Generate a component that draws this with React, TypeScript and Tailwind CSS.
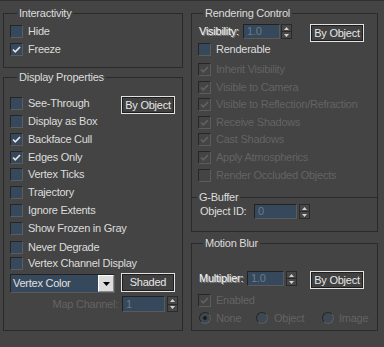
type BoxProps = { checked?: boolean; disabled?: boolean }

function CheckBox({ checked = false, disabled = false }: BoxProps) {
  return (
    <span
      className={`flex h-[13px] w-[13px] shrink-0 items-center justify-center border border-t-[#262626] border-l-[#262626] border-r-[#5c5c5c] border-b-[#5c5c5c] ${
        disabled ? 'bg-[#444444]' : 'bg-[#36495c]'
      }`}
    >
      {checked && (
        <svg width="11" height="11" viewBox="0 0 11 11">
          <path
            d="M2 5.5 L4.3 7.8 L9 3"
            fill="none"
            stroke={disabled ? '#626262' : '#e4e4e4'}
            strokeWidth="1.7"
          />
        </svg>
      )}
    </span>
  )
}

function CheckRow({
  label,
  checked,
  disabled,
  className = '',
}: BoxProps & { label: string; className?: string }) {
  return (
    <div className={`flex h-[13px] items-center ${className}`}>
      <CheckBox checked={checked} disabled={disabled} />
      <span className={`ml-[5px] whitespace-nowrap leading-[13px] ${disabled ? 'text-[#636363]' : ''}`}>
        {label}
      </span>
    </div>
  )
}

function Radio({ on = false }: { on?: boolean }) {
  return (
    <span className="flex h-[12px] w-[12px] shrink-0 items-center justify-center rounded-full border border-t-[#262626] border-l-[#262626] border-r-[#5c5c5c] border-b-[#5c5c5c] bg-[#3e4853]">
      {on && <span className="h-[4px] w-[4px] rounded-full bg-[#1c1c1c]" />}
    </span>
  )
}

function Field({ value, className }: { value: string; className: string }) {
  return (
    <div
      className={`flex items-center border border-t-[#222222] border-l-[#222222] border-r-[#5a5a5a] border-b-[#5a5a5a] bg-[#36495c] pl-[3px] leading-[13px] text-[#6b7988] ${className}`}
    >
      {value}
    </div>
  )
}

function Spin({ className }: { className: string }) {
  return (
    <div className={`flex w-[11px] flex-col border border-[#2a2a2a] bg-[#474747] ${className}`}>
      <div className="flex flex-1 items-center justify-center">
        <svg width="5" height="3" viewBox="0 0 5 3">
          <path d="M2.5 0 L5 3 L0 3 Z" fill="#d2d2d2" />
        </svg>
      </div>
      <div className="flex flex-1 items-center justify-center border-t border-[#2a2a2a]">
        <svg width="5" height="3" viewBox="0 0 5 3">
          <path d="M0 0 L5 0 L2.5 3 Z" fill="#d2d2d2" />
        </svg>
      </div>
    </div>
  )
}

function Btn({ label, className }: { label: string; className: string }) {
  return (
    <div
      className={`flex w-[54px] items-center justify-center border border-[#e2e2e2] bg-[#414141] leading-[13px] text-[#e6e6e6] shadow-[inset_0_0_0_1px_#1e1e1e] ${className}`}
    >
      {label}
    </div>
  )
}

export default function App() {
  return (
    <div className="flex h-[347px] w-[384px] gap-[8px] overflow-hidden bg-[#444444] pl-[3px] font-['Liberation_Sans',Arial,sans-serif] text-[11px] tracking-[-0.25px] text-[#dcdcdc] shadow-[inset_0_1px_0_#303030]">
      {/* left column */}
      <div className="mt-[7px] flex w-[180px] flex-col">
        <fieldset className="border border-[#2a2a2a] pb-[11px] pl-[6px]">
          <legend className="ml-[7px] px-[2px] leading-[13px]">Interactivity</legend>
          <CheckRow label="Hide" className="mt-[5px]" />
          <CheckRow label="Freeze" checked className="mt-[5px]" />
        </fieldset>

        <fieldset className="mt-[3px] border border-[#2a2a2a] pt-[12px] pb-[18px] pl-[6px]">
          <legend className="ml-[7px] px-[2px] leading-[13px]">Display Properties</legend>
          <div className="flex h-[18px] items-start">
            <div className="flex h-[15px] w-[111px] items-center">
              <CheckRow label="See-Through" />
            </div>
            <Btn label="By Object" className="h-[18px]" />
          </div>
          <CheckRow label="Display as Box" className="mt-[1px]" />
          <CheckRow label="Backface Cull" checked className="mt-[5px]" />
          <CheckRow label="Edges Only" checked className="mt-[5px]" />
          <CheckRow label="Vertex Ticks" className="mt-[4px]" />
          <CheckRow label="Trajectory" className="mt-[5px]" />
          <CheckRow label="Ignore Extents" className="mt-[5px]" />
          <CheckRow label="Show Frozen in Gray" className="mt-[5px]" />
          <CheckRow label="Never Degrade" className="mt-[6px]" />
          <CheckRow label="Vertex Channel Display" className="mt-[3px]" />

          <div className="mt-[3px] flex h-[20px] items-start">
            <div className="mt-[1px] flex h-[19px] w-[105px] items-center border border-t-[#222222] border-l-[#222222] border-r-[#5a5a5a] border-b-[#5a5a5a] bg-[#36495c]">
              <span className="flex-1 pl-[2px] leading-[13px] text-[#e0e0e0]">Vertex Color</span>
              <span className="flex h-full w-[16px] items-center justify-center border border-t-[#ffffff] border-l-[#ffffff] border-r-[#8a8a8a] border-b-[#8a8a8a] bg-[#dcdcdc]">
                <svg width="7" height="4" viewBox="0 0 7 4">
                  <path d="M0 0 L7 0 L3.5 4 Z" fill="#000000" />
                </svg>
              </span>
            </div>
            <Btn label="Shaded" className="ml-[6px] h-[19px]" />
          </div>

          <div className="mt-[3px] flex h-[16px] items-center">
            <span className="w-[108px] whitespace-nowrap text-right leading-[13px] text-[#636363]">Map Channel:</span>
            <Field value="1" className="ml-[4px] h-[16px] w-[43px]" />
            <Spin className="ml-[2px] h-[16px]" />
          </div>
        </fieldset>
      </div>

      {/* right column */}
      <div className="mt-[7px] flex w-[187px] flex-col">
        <fieldset className="border border-[#2a2a2a] pt-[4px] pb-[12px] pl-[6px]">
          <legend className="ml-[5px] px-[2px] leading-[13px]">Rendering Control</legend>
          <div className="flex h-[18px] items-start">
            <span className="ml-[1px] flex h-[15px] w-[44px] items-center leading-[13px] text-[#f6f6f6] [text-shadow:1px_1px_0_#8a8a8a]">
              Visibility:
            </span>
            <Field value="1.0" className="h-[15px] w-[37px]" />
            <Spin className="ml-[1px] h-[15px]" />
            <Btn label="By Object" className="ml-[18px] h-[18px]" />
          </div>
          <CheckRow label="Renderable" className="mt-[1px]" />
          <CheckRow label="Inherit Visibility" checked disabled className="mt-[7px]" />
          <CheckRow label="Visible to Camera" checked disabled className="mt-[5px]" />
          <CheckRow label="Visible to Reflection/Refraction" checked disabled className="mt-[4px]" />
          <CheckRow label="Receive Shadows" checked disabled className="mt-[5px]" />
          <CheckRow label="Cast Shadows" checked disabled className="mt-[4px]" />
          <CheckRow label="Apply Atmospherics" checked disabled className="mt-[5px]" />
          <CheckRow label="Render Occluded Objects" disabled className="mt-[5px]" />

          <div className="-ml-[6px] mt-[9px] flex h-[13px] items-center">
            <div className="h-px w-[5px] bg-[#2a2a2a]" />
            <span className="px-[2px] leading-[13px]">G-Buffer</span>
            <div className="h-px flex-1 bg-[#2a2a2a]" />
          </div>
          <div className="flex h-[15px] items-center">
            <span className="ml-[2px] w-[54px] leading-[13px]">Object ID:</span>
            <Field value="0" className="h-[15px] w-[43px]" />
            <Spin className="ml-[2px] h-[15px]" />
          </div>
        </fieldset>

        <fieldset className="mt-[5px] border border-[#2a2a2a] pt-[21px] pb-[6px] pl-[6px]">
          <legend className="ml-[5px] px-[2px] leading-[13px]">Motion Blur</legend>
          <div className="flex h-[18px] items-start">
            <span className="ml-[1px] flex h-[15px] w-[48px] items-center leading-[13px] text-[#f6f6f6] [text-shadow:1px_1px_0_#8a8a8a]">
              Multiplier:
            </span>
            <Field value="1.0" className="h-[15px] w-[37px]" />
            <Spin className="ml-[2px] h-[15px]" />
            <Btn label="By Object" className="ml-[13px] h-[18px]" />
          </div>
          <CheckRow label="Enabled" checked disabled className="mt-[5px]" />
          <div className="ml-[1px] mt-[5px] flex h-[12px] items-center text-[#636363]">
            <div className="flex w-[57px] items-center">
              <Radio on />
              <span className="ml-[5px] leading-[13px]">None</span>
            </div>
            <div className="flex w-[66px] items-center">
              <Radio />
              <span className="ml-[6px] leading-[13px]">Object</span>
            </div>
            <div className="flex items-center">
              <Radio />
              <span className="ml-[5px] leading-[13px]">Image</span>
            </div>
          </div>
        </fieldset>
      </div>
    </div>
  )
}
